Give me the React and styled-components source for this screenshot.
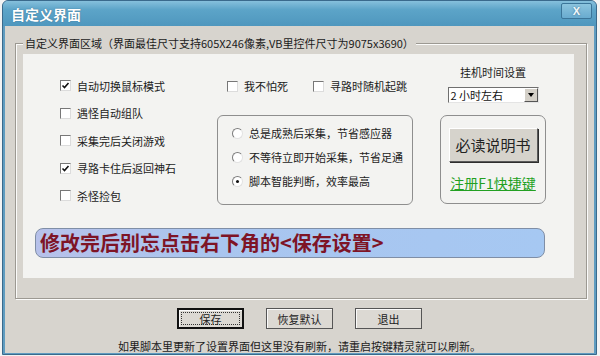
import React from 'react';
import styled, {createGlobalStyle} from 'styled-components';

const FONT = `"Noto Sans CJK SC", "Liberation Sans", sans-serif`;

const Global = createGlobalStyle`
  html, body {
    margin: 0;
    background: #f3f3f3;
    font-family: ${FONT};
  }
`;

const Window = styled.div`
  width: 595px;
  height: 355px;
  margin-left: 2px;
  box-sizing: border-box;
  border: 1px solid #3a6a8c;
  border-radius: 6px 6px 0 0;
  background: #5f9cc0;
  display: flex;
  flex-direction: column;
  overflow: hidden;
`;

const TitleBar = styled.div`
  height: 25px;
  flex: none;
  display: flex;
  align-items: center;
  justify-content: space-between;
  padding: 0 4px 0 8px;
  background: linear-gradient(#86c0dc, #5ca4c8 35%, #4f97be);
`;

const Title = styled.div`
  color: #fff;
  font-size: 14px;
  font-weight: 700;
  line-height: 16px;
  text-shadow: 0 0 1px #2d5c7c;
`;

const CloseBtn = styled.div`
  width: 29px;
  height: 14px;
  margin-top: -5px;
  border: 1px solid #3b7599;
  border-radius: 2px;
  background: linear-gradient(#8cc4de, #69abcf);
  color: #f2f8fb;
  font: bold 11px "Liberation Sans", sans-serif;
  line-height: 14px;
  text-align: center;
  text-shadow: 0 0 2px #3d6c8a;
`;

const Body = styled.div`
  flex: 1;
  margin: 0 2px 2px 2px;
  background: #d7d4ce;
  display: flex;
  flex-direction: column;
`;

const Group = styled.div`
  position: relative;
  margin: 17px 7px 0 10px;
  height: 256px;
  box-sizing: border-box;
  border: 1px solid #9c9992;
  box-shadow: inset 1px 1px 0 #fbfbfa, 1px 1px 0 #fbfbfa;
  padding: 10px 0 0 7px;
`;

const Legend = styled.div`
  position: absolute;
  top: -8px;
  left: 7px;
  padding: 0 2px;
  background: #d7d4ce;
  font-size: 11px;
  line-height: 15px;
  color: #1b1b1b;
`;

const Panel = styled.div`
  width: 551px;
  height: 224px;
  background: #f3f3f1;
  display: flex;
  flex-direction: column;
`;

const Top = styled.div`
  height: 174px;
  display: flex;
`;

const LeftCol = styled.div`
  width: 157px;
  padding: 18px 0 0 37px;
  display: flex;
  flex-direction: column;
`;

const Row = styled.div`
  height: ${p => p.$h || 27.5}px;
  width: ${p => (p.$w ? `${p.$w}px` : 'auto')};
  display: flex;
  align-items: center;
  gap: 6px;
  font-size: 11px;
  color: #1b1b1b;
  white-space: nowrap;
`;

const Box = styled.span`
  width: 11px;
  height: 11px;
  flex: none;
  box-sizing: border-box;
  border: 1px solid;
  border-color: #777 #dcdcdc #dcdcdc #777;
  background: #fff;
  display: flex;
  align-items: center;
  justify-content: center;
`;

const Radio = styled.span`
  width: 11px;
  height: 11px;
  flex: none;
  box-sizing: border-box;
  border-radius: 50%;
  border: 1px solid;
  border-color: #7c7c7c #e2e2e2 #e2e2e2 #7c7c7c;
  background: #fff;
  display: flex;
  align-items: center;
  justify-content: center;

  &::after {
    content: '';
    width: 3px;
    height: 3px;
    border-radius: 50%;
    background: ${p => (p.$on ? '#111' : 'transparent')};
  }
`;

const MidCol = styled.div`
  width: 196px;
  display: flex;
  flex-direction: column;
`;

const CheckLine = styled.div`
  display: flex;
  margin: 24px 0 0 10px;
`;

const RadioBox = styled.div`
  margin-top: 21px;
  height: 90px;
  box-sizing: border-box;
  border: 1px solid #8e8e8e;
  border-radius: 6px;
  padding: 5px 0 0 14px;
  display: flex;
  flex-direction: column;
`;

const RightCol = styled.div`
  width: 106px;
  margin-left: 27px;
  display: flex;
  flex-direction: column;
  align-items: center;
`;

const Label = styled.div`
  margin-top: 10px;
  font-size: 11px;
  line-height: 16px;
  color: #1b1b1b;
`;

const Select = styled.div`
  margin-top: 7px;
  width: 91px;
  height: 16px;
  box-sizing: border-box;
  border: 1px solid;
  border-color: #6f6f6f #e4e4e4 #e4e4e4 #6f6f6f;
  background: #fff;
  display: flex;
  align-items: center;
  justify-content: space-between;
  font-size: 11px;
  line-height: 14px;
  padding-left: 2px;
  color: #111;
`;

const Drop = styled.span`
  width: 14px;
  height: 14px;
  box-sizing: border-box;
  border: 1px solid;
  border-color: #fff #555 #555 #fff;
  background: #d4d0c8;
  display: flex;
  align-items: center;
  justify-content: center;

  &::after {
    content: '';
    border: 3px solid transparent;
    border-top: 4px solid #000;
    border-bottom: 0;
  }
`;

const ButtonBox = styled.div`
  margin-top: 12px;
  width: 106px;
  height: 89px;
  box-sizing: border-box;
  border: 1px solid #8e8e8e;
  border-radius: 7px;
  padding: 12px 7px 0;
  display: flex;
  flex-direction: column;
  align-items: center;
`;

const BigButton = styled.div`
  width: 89px;
  height: 34px;
  box-sizing: border-box;
  border: 1px solid;
  border-color: #fff #5a5a5a #5a5a5a #fff;
  box-shadow: 1px 1px 0 #2e2e2e;
  background: #d6d3cc;
  font-size: 15px;
  line-height: 32px;
  text-align: center;
  color: #222;
`;

const Link = styled.div`
  margin-top: 13px;
  font-size: 14px;
  line-height: 16px;
  color: #22a022;
  text-decoration: underline;
  white-space: nowrap;
`;

const Banner = styled.div`
  margin-left: 12px;
  width: 510px;
  height: 30px;
  box-sizing: border-box;
  border: 1px solid #7f8ea6;
  border-radius: 8px;
  background: linear-gradient(90deg, #b7c1ea, #a9c5ef 35%, #a6c8f2);
  padding-left: 4px;
  font-size: 20px;
  font-weight: 700;
  line-height: 28px;
  color: #7e1426;
  white-space: nowrap;
`;

const ButtonRow = styled.div`
  display: flex;
  justify-content: center;
  gap: 22px;
  margin-top: 9px;
`;

const DlgButton = styled.div`
  width: 67px;
  height: 21px;
  box-sizing: border-box;
  border: ${p => (p.$default ? '2px solid #111' : '1px solid #555')};
  box-shadow: inset 1px 1px 0 #fafafa;
  background: #dcd9d3;
  display: flex;
  align-items: center;
  justify-content: center;
  font-size: 11px;
  color: #222;
`;

const Focus = styled.span`
  flex: 1;
  align-self: stretch;
  margin: 2px;
  border: 1px dotted #333;
  text-align: center;
  line-height: 13px;
`;

const Footer = styled.div`
  margin-top: 10px;
  text-align: center;
  font-size: 11px;
  line-height: 14px;
  color: #1b1b1b;
`;

const Check = ({on}) => (
  <Box>
    {on && (
      <svg width="9" height="9" viewBox="0 0 9 9">
        <path d="M1.5 4.5 L3.5 6.5 L7.5 2" fill="none" stroke="#111" strokeWidth="1.6" />
      </svg>
    )}
  </Box>
);

const leftItems = [
  ['自动切换鼠标模式', true],
  ['遇怪自动组队', false],
  ['采集完后关闭游戏', false],
  ['寻路卡住后返回神石', true],
  ['杀怪捡包', false],
];

const radios = [
  ['总是成熟后采集，节省感应器', false],
  ['不等待立即开始采集，节省足通', false],
  ['脚本智能判断，效率最高', true],
];

export default function App() {
  return (
    <>
      <Global />
      <Window>
        <TitleBar>
          <Title>自定义界面</Title>
          <CloseBtn>X</CloseBtn>
        </TitleBar>
        <Body>
          <Group>
            <Legend>自定义界面区域（界面最佳尺寸支持605X246像素,VB里控件尺寸为9075x3690）</Legend>
            <Panel>
              <Top>
                <LeftCol>
                  {leftItems.map(([t, on]) => (
                    <Row key={t}>
                      <Check on={on} />
                      {t}
                    </Row>
                  ))}
                </LeftCol>
                <MidCol>
                  <CheckLine>
                    <Row $h={16} $w={86}>
                      <Check />
                      我不怕死
                    </Row>
                    <Row $h={16}>
                      <Check />
                      寻路时随机起跳
                    </Row>
                  </CheckLine>
                  <RadioBox>
                    {radios.map(([t, on]) => (
                      <Row key={t} $h={24}>
                        <Radio $on={on} />
                        {t}
                      </Row>
                    ))}
                  </RadioBox>
                </MidCol>
                <RightCol>
                  <Label>挂机时间设置</Label>
                  <Select>
                    2 小时左右
                    <Drop />
                  </Select>
                  <ButtonBox>
                    <BigButton>必读说明书</BigButton>
                    <Link>注册F1快捷键</Link>
                  </ButtonBox>
                </RightCol>
              </Top>
              <Banner>修改完后别忘点击右下角的&lt;保存设置&gt;</Banner>
            </Panel>
          </Group>
          <ButtonRow>
            <DlgButton $default>
              <Focus>保存</Focus>
            </DlgButton>
            <DlgButton>恢复默认</DlgButton>
            <DlgButton>退出</DlgButton>
          </ButtonRow>
          <Footer>如果脚本里更新了设置界面但这里没有刷新，请重启按键精灵就可以刷新。</Footer>
        </Body>
      </Window>
    </>
  );
}
